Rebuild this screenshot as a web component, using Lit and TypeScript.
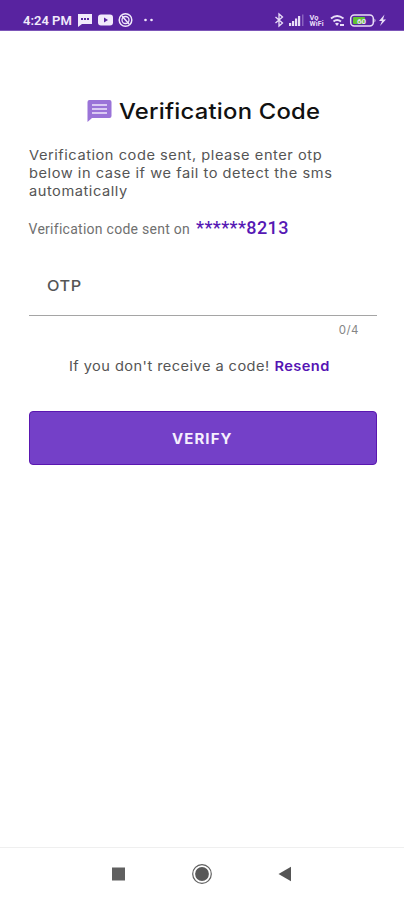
import { LitElement, html, css } from "lit";
import { customElement } from "lit/decorators.js";

@customElement("status-bar")
class StatusBar extends LitElement {
  static styles = css`
    :host {
      display: flex;
      box-sizing: border-box;
      height: 31px;
      padding: 9px 17px 0 23px;
      justify-content: space-between;
      background: #5823a0;
      border-bottom: 1px solid #7c55b8;
      color: #f1e9fb;
      font-family: Roboto, sans-serif;
    }
    .side { display: flex; align-items: center; height: 22px; }
    .time { font-size: 13px; font-weight: 600; width: 49px; white-space: nowrap; margin-right: 5px; }
    svg { display: block; flex: none; }
  `;
  render() {
    return html`
      <div class="side">
        <span class="time">4:24 PM</span>
        <svg width="80" height="22" viewBox="0 0 80 22" fill="#f1e9fb">
          <path d="M1 5h14v10H5l-4 3z" />
          <path d="M4 9h2v2H4zM7 9h2v2H7zM10 9h2v2h-2z" fill="#5823a0" />
          <rect x="21" y="5.500" width="15" height="11" rx="3" />
          <path d="M27 8.500l4 2.500-4 2.500z" fill="#5823a0" />
          <circle cx="48.500" cy="11" r="6.300" fill="none" stroke="#f1e9fb" stroke-width="1.500" />
          <circle cx="48.500" cy="11" r="3.500" fill="none" stroke="#f1e9fb" stroke-width="1.300" />
          <path d="M45 7l7 8" stroke="#f1e9fb" stroke-width="1.500" />
          <circle cx="68.500" cy="11" r="1.300" />
          <circle cx="74.500" cy="11" r="1.300" />
        </svg>
      </div>
      <div class="side">
        <svg width="114" height="22" viewBox="273 0 114 22" fill="#e9def8">
          <path d="M275.500 8l7 6-3.500 3V5l3.500 3-7 6" fill="none" stroke="#e9def8" stroke-width="1.300" />
          <path d="M289 14h2.200v3H289zM292 12h2.200v5H292zM295 9.500h2.200V17H295zM298 7h2.200v10H298z" />
          <path d="M302 5.500h1.500V17H302z" opacity=".35" />
          <text x="309.500" y="10.500" font-family="Roboto, sans-serif" font-size="7.500" font-weight="700">Vo</text>
          <text x="309.500" y="17" font-family="Roboto, sans-serif" font-size="7" font-weight="700" textLength="14">WiFi</text>
          <path d="M331 9.500q6-5 12.500 0M333.500 12.500q3.500-3 7.500 0" fill="none" stroke="#e9def8" stroke-width="1.900" />
          <path d="M335 14.500q2-1.500 4 0l-2 2.500zM340 15h4v2h-4z" />
          <rect x="350.700" y="6" width="22.600" height="11" rx="3.500" fill="none" stroke="#e9def8" stroke-width="1.500" />
          <path d="M374.500 9.500q2 2 0 4z" />
          <rect x="353" y="8" width="12" height="7" rx="1" fill="#62c531" />
          <text x="357" y="14.500" font-family="Roboto, sans-serif" font-size="8" font-weight="700">60</text>
          <path d="M384.500 5.500l-5.500 6.500h3l-2 5 6-6.500h-3z" />
        </svg>
      </div>
    `;
  }
}

@customElement("nav-bar")
class NavBar extends LitElement {
  static styles = css`
    :host {
      display: flex;
      box-sizing: border-box;
      height: 53px;
      border-top: 1px solid #efefef;
      justify-content: center;
      align-items: center;
      gap: 62px;
    }
    svg { display: block; }
  `;
  render() {
    return html`
      <svg width="22" height="22" viewBox="0 0 22 22"><rect x="5" y="4.500" width="13" height="13" fill="#606060" /></svg>
      <svg width="22" height="22" viewBox="0 0 22 22">
        <circle cx="11" cy="11" r="9.300" fill="none" stroke="#606060" stroke-width="1.200" />
        <circle cx="11" cy="11" r="6.900" fill="#585858" />
      </svg>
      <svg width="22" height="22" viewBox="0 0 22 22"><path d="M3.500 11l12.500-7.300v14.600z" fill="#555" /></svg>
    `;
  }
}

@customElement("app-root")
class AppRoot extends LitElement {
  static styles = css`
    :host {
      display: flex;
      flex-direction: column;
      height: 900px;
      background: #fff;
      font-family: Inter, "Liberation Sans", sans-serif;
      color: #555;
    }
    main { flex: 1; padding: 65px 27px 0 28.5px; }
    div, span, p, h1, button { white-space: nowrap; }
    .wide { transform: scaleX(1.083); transform-origin: left center; }
    .heading { display: flex; align-items: center; height: 30px; padding-left: 58.5px; gap: 6.5px; }
    .heading svg { flex: none; }
    h1 { margin: 0; font-size: 22px; font-weight: 500; letter-spacing: 0.2px; color: #111; }
    .intro { margin: 20px 0 0; font-size: 13.5px; line-height: 18px; letter-spacing: 0.5px; }
    .intro span { display: block; }
    .sent { display: flex; align-items: baseline; gap: 6px; height: 24px; margin-top: 16px; line-height: 24px; font-family: Roboto, sans-serif; font-size: 14px; letter-spacing: 0.27px; color: #707070; }
    .number { font-size: 18px; font-weight: 500; letter-spacing: 0.4px; color: #5618b4; }
    .field { box-sizing: border-box; height: 76px; padding: 34px 18px 0; border-bottom: 1px solid #a5a5a5; font-size: 15px; line-height: 24px; font-weight: 500; }
    .label { display: inline-block; letter-spacing: 0.5px; }
    .count { padding: 6px 18px 0 0; text-align: right; font-size: 11.5px; line-height: 16px; letter-spacing: 0.5px; color: #858585; }
    .again { display: flex; gap: 4.5px; margin: 18px 0 0 40.5px; font-size: 13.5px; line-height: 20px; letter-spacing: 0.4px; }
    .resend { color: #5514b4; font-weight: 600; }
    button { display: block; box-sizing: border-box; width: 100%; height: 54px; margin: 35px 0 0; padding: 0; border: 1px solid #5a17b0; border-radius: 4px; background: #7440c8; color: #f6effe; font: 700 14px Inter, sans-serif; letter-spacing: 1px; }
    .action { display: inline-block; transform: scaleX(1.07); }
  `;
  render() {
    return html`
      <status-bar></status-bar>
      <main>
        <div class="heading">
          <svg width="25" height="24" viewBox="0 0 25 24">
            <path d="M2.500 1h20q2 0 2 2v14q0 2-2 2H5l-4.500 4V3q0-2 2-2z" fill="#9a73d8" />
            <path d="M5 6h15M5 10h15M5 14h15" stroke="#f0e7fb" stroke-width="1.700" />
          </svg>
          <h1 class="wide">Verification Code</h1>
        </div>
        <p class="intro wide">
          <span>Verification code sent, please enter otp</span>
          <span>below in case if we fail to detect the sms</span>
          <span>automatically</span>
        </p>
        <div class="sent"><span>Verification code sent on</span><span class="number">******8213</span></div>
        <div class="field"><span class="label wide">OTP</span></div>
        <div class="count">0/4</div>
        <div class="again wide"><span>If you don't receive a code!</span><span class="resend">Resend</span></div>
        <button><span class="action">VERIFY</span></button>
      </main>
      <nav-bar></nav-bar>
    `;
  }
}
